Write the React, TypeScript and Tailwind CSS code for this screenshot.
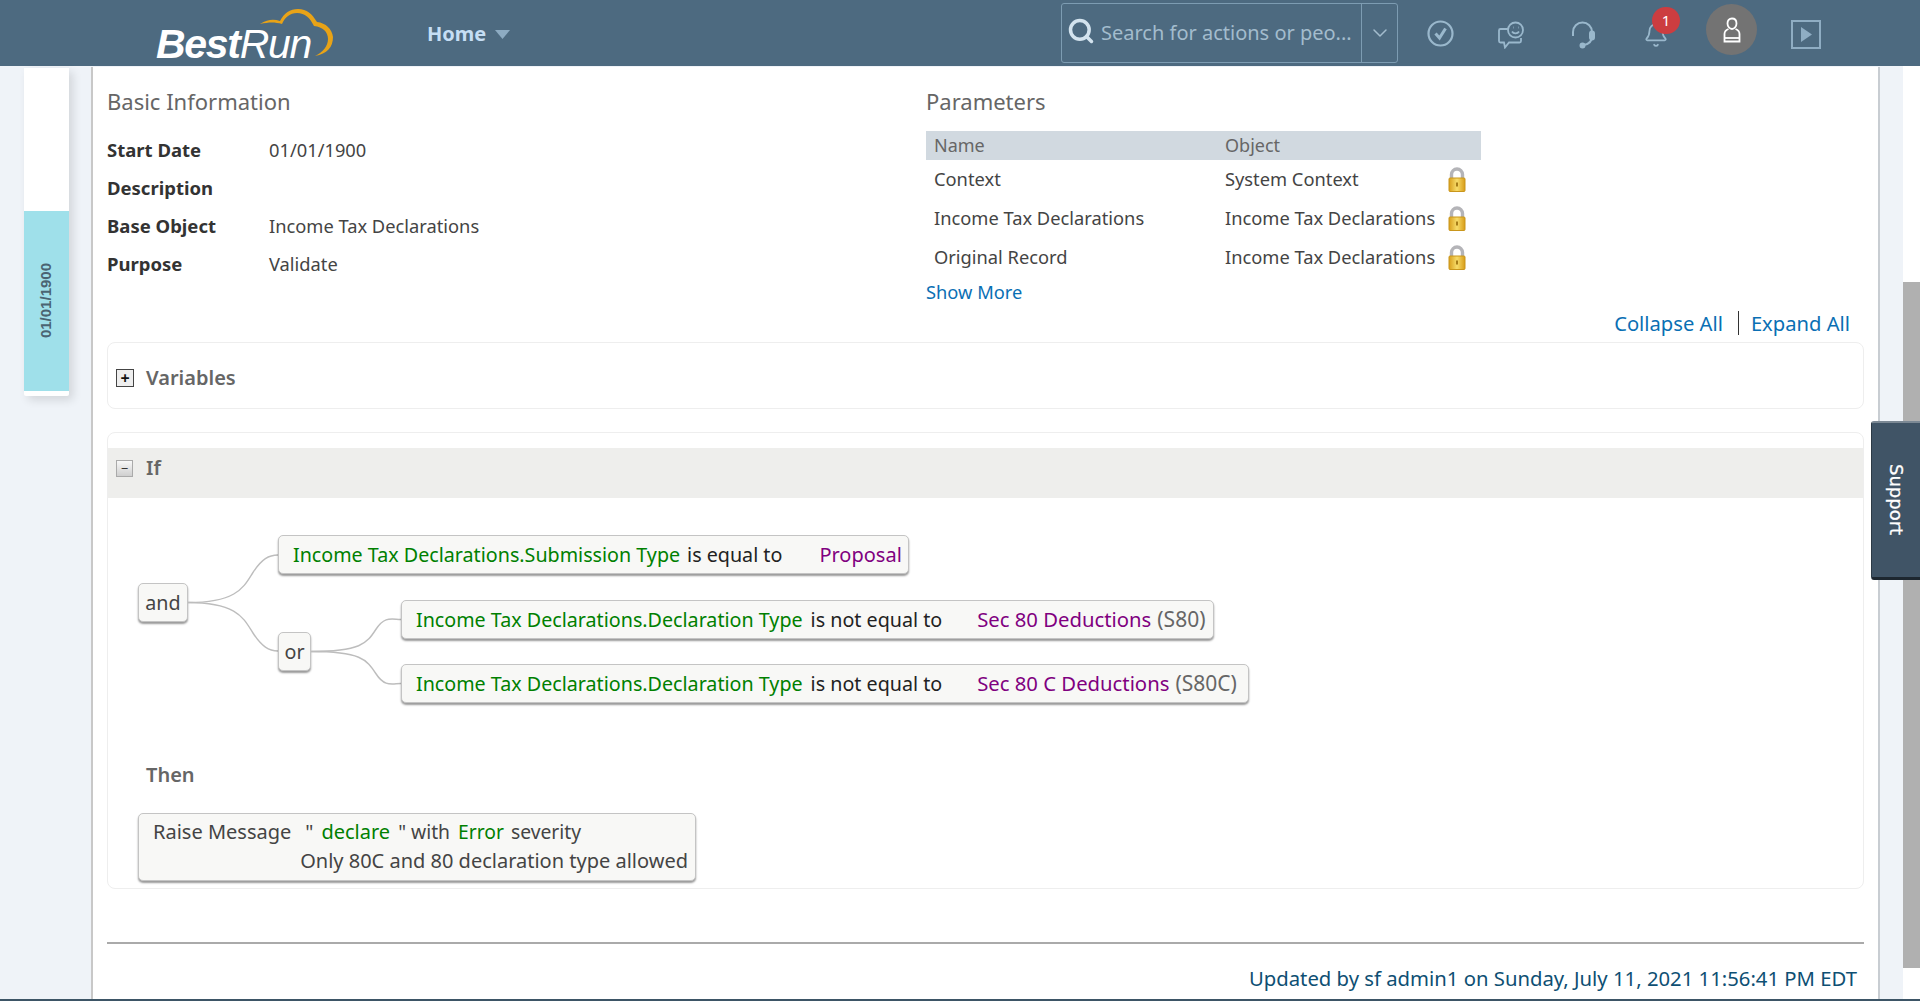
import { ChevronDown, Bell, Search } from 'lucide-react';

interface InfoRow {
  label: string;
  value: string;
}

interface ParamRow {
  name: string;
  object: string;
}

const infoRows: InfoRow[] = [
  { label: 'Start Date', value: '01/01/1900' },
  { label: 'Description', value: '' },
  { label: 'Base Object', value: 'Income Tax Declarations' },
  { label: 'Purpose', value: 'Validate' },
];

const paramRows: ParamRow[] = [
  { name: 'Context', object: 'System Context' },
  { name: 'Income Tax Declarations', object: 'Income Tax Declarations' },
  { name: 'Original Record', object: 'Income Tax Declarations' },
];

function Lock() {
  return (
    <svg width="18" height="25" viewBox="0 0 18 25" className="shrink-0">
      <defs>
        <linearGradient id="lockbody" x1="0" y1="0" x2="1" y2="0">
          <stop offset="0" stopColor="#d99f1c" />
          <stop offset="0.5" stopColor="#f7dc6a" />
          <stop offset="1" stopColor="#d89c18" />
        </linearGradient>
      </defs>
      <path d="M3.500 12V7.500a5.500 5.500 0 0 1 11 0V12" fill="none" stroke="#b4b4b8" strokeWidth="3.400" />
      <rect x="1" y="11" width="16" height="13.500" rx="1" fill="url(#lockbody)" stroke="#c9961c" />
      <rect x="8" y="15.500" width="2" height="4" fill="#a67c18" />
    </svg>
  );
}

function Node({ children, className }: { children: React.ReactNode; className: string }) {
  return (
    <div
      className={`h-[39px] shrink-0 flex items-center whitespace-nowrap rounded-[5px] border border-[#c4c4c4] bg-[#f8f8f6] shadow-[0_2px_2px_rgba(0,0,0,0.4)] text-[19.7px] ${className}`}
    >
      {children}
    </div>
  );
}

function Connector({ w, h, from, to }: { w: number; h: number; from: number; to: number[] }) {
  return (
    <svg width={w} height={h} viewBox={`0 0 ${w} ${h}`} className="shrink-0" fill="none" stroke="#bdbdbd" strokeWidth="1.4">
      {to.map((y) => (
        <path key={y} d={`M0 ${from} C${w * 0.55} ${from} ${w * 0.62} ${(from + y) / 2 + (y < from ? 8 : -8)} ${w * 0.72} ${(from + y) / 2 + (y < from ? -6 : 6)} S${w * 0.9} ${y} ${w} ${y}`} />
      ))}
    </svg>
  );
}

function App() {
  return (
    <div className="w-[1920px] h-[1001px] overflow-hidden flex flex-col bg-[#eff3f8] font-['Noto_Sans',sans-serif] text-[#333]">
      {/* top bar */}
      <header className="relative h-[66px] shrink-0 flex items-center bg-[#4d6a80]">
        <div className="ml-[156px] w-[271px] relative h-[66px]">
          <div className="absolute left-0 top-[21px] whitespace-nowrap italic text-white text-[41px] leading-[46px] tracking-[-1.3px] font-['Liberation_Sans',sans-serif]">
            <span className="font-bold">Best</span>
            <span className="font-normal">Run</span>
          </div>
          <svg width="90" height="60" viewBox="0 0 90 60" className="absolute left-[100px] top-0" fill="none">
            <path d="M4 24c8-5 14-5 20-3 4-8 10-12 18-12 9 0 14 5 19 13 9 1 15 7 16 15 0 10-6 17-18 19 8-4 13-10 13-17 0-7-5-12-14-13-4-8-9-13-17-13-7 0-12 4-15 11-7-2-13-2-22 0z" fill="#e8a317" />
          </svg>
        </div>
        <span className="w-[68px] mt-[2px] text-[20px] font-bold text-[#c5def4]">Home</span>
        <svg width="15" height="9" viewBox="0 0 15 9" className="shrink-0 mt-[2px]">
          <path d="M0 0h15L7.5 9z" fill="#8dabc2" />
        </svg>
        <div className="ml-[551px] w-[337px] h-[60px] -mt-[1px] flex items-center rounded-[3px] border border-[#7d9cb2]">
          <Search className="ml-[5px] w-[28px] h-[28px] text-[#d3e3ee] shrink-0 -mt-[3px]" strokeWidth={3} />
          <span className="ml-[6px] w-[260px] text-[20px] text-[#a3bccd] whitespace-nowrap">Search for actions or peo...</span>
          <div className="h-full w-[36px] border-l border-[#7d9cb2] flex items-center justify-center">
            <ChevronDown className="w-[24px] h-[24px] text-[#a3bccd]" strokeWidth={1.5} />
          </div>
        </div>
        <svg width="27" height="27" viewBox="0 0 27 27" className="ml-[29px] shrink-0" fill="none" stroke="#9ab8cc">
          <circle cx="13.500" cy="13.500" r="12" strokeWidth="2.200" />
          <path d="M8.500 13.500l4 4.500 6-9.500" strokeWidth="3" />
        </svg>
        <svg width="28" height="28" viewBox="0 0 28 28" className="ml-[43px] shrink-0 mt-[3px]" fill="none" stroke="#9ab8cc" strokeWidth="1.8">
          <path d="M11 8H3.5a1.5 1.5 0 0 0-1.5 1.5V20a1.5 1.5 0 0 0 1.5 1.500H7l1 5 4-5h10.500a1.500 1.500 0 0 0 1.500-1.500v-3" />
          <circle cx="18.500" cy="9" r="7.500" />
          <path d="M15 10.500c1.500 2.500 5.500 2.500 7 0M16 6.500h.5M21 6.500h.5" />
        </svg>
        <svg width="26" height="28" viewBox="0 0 26 28" className="ml-[44px] shrink-0 mt-[3px]" fill="none" stroke="#9ab8cc" strokeWidth="2">
          <path d="M4 15V11a9.500 9.500 0 0 1 19 0v4" />
          <path d="M23 15c0 5-3 8-8 9" />
          <rect x="21" y="10.500" width="4" height="8" rx="2" fill="#9ab8cc" />
          <circle cx="13.500" cy="24.500" r="2" fill="#9ab8cc" />
        </svg>
        <div className="relative ml-[48px] w-[26px] h-[30px] shrink-0 mt-[2px]">
          <Bell className="w-[26px] h-[28px] text-[#9ab8cc] mt-[2px]" strokeWidth={1.6} />
          <span className="absolute left-[9px] top-[-12px] w-[28px] h-[27px] rounded-full bg-[#cc3d40] text-white text-[15px] flex items-center justify-center">1</span>
        </div>
        <div className="ml-[37px] w-[51px] h-[51px] -mt-[7px] rounded-full bg-[#737373] flex items-center justify-center shrink-0">
          <svg width="20" height="26" viewBox="0 0 20 26" fill="none" stroke="#fff" strokeWidth="1.8">
            <path d="M10 1.500c3 0 4.500 2.200 4.500 5s-2 5.500-4.500 5.500-4.500-2.700-4.500-5.500 1.500-5 4.500-5z" />
            <path d="M6.500 12c-2.500 1-4 2.500-4 5v7.500h15V17c0-2.500-1.500-4-4-5" />
            <path d="M2.500 21h15" />
          </svg>
        </div>
        <svg width="30" height="29" viewBox="0 0 30 29" className="ml-[34px] shrink-0 mt-[2px]" fill="none">
          <rect x="1" y="1" width="28" height="27" stroke="#8fadc3" strokeWidth="2" />
          <path d="M10 7l11 7.500L10 22z" fill="#8fadc3" />
        </svg>
      </header>

      <div className="relative flex-1 min-h-0 flex">
        {/* effective date rail */}
        <div className="w-[91px] shrink-0 pl-[24px]">
          <div className="w-[45px] mt-[2px] h-[328px] flex flex-col bg-white rounded-b-[2px] shadow-[4px_4px_10px_rgba(0,0,0,0.12)]">
            <div className="h-[143px]"></div>
            <div className="h-[180px] bg-[#9fe0ea] flex items-center justify-center pr-[1px]">
              <span className="[writing-mode:vertical-rl] rotate-180 text-[15px] font-bold text-[#4a6472] font-['Liberation_Sans',sans-serif]">01/01/1900</span>
            </div>
          </div>
        </div>

        {/* rule panel */}
        <main className="w-[1789px] shrink-0 mt-[1px] h-[932px] bg-white border-l-2 border-r-2 border-l-[#c8c8c8] border-r-[#c8cdd2] pl-[14px] pr-[14px]">
          <div className="flex h-[241px]">
            <section className="w-[819px] shrink-0 pt-[19px]">
              <h2 className="text-[22px] font-normal leading-[30px] text-[#666]">Basic Information</h2>
              <div className="mt-[15px] flex flex-col">
                {infoRows.map((row) => (
                  <div key={row.label} className="h-[38px] flex items-center text-[18.3px]">
                    <span className="w-[162px] text-[18.500px] font-bold text-[#333]">{row.label}</span>
                    <span className="text-[#444]">{row.value}</span>
                  </div>
                ))}
              </div>
            </section>
            <section className="w-[555px] shrink-0 pt-[19px]">
              <h2 className="text-[22px] font-normal leading-[30px] text-[#666]">Parameters</h2>
              <div className="mt-[15px] h-[29px] bg-[#d1d9e0] flex items-center pl-[8px] text-[18px] text-[#666]">
                <span className="w-[291px]">Name</span>
                <span>Object</span>
              </div>
              {paramRows.map((row) => (
                <div key={row.name} className="h-[39px] flex items-center pl-[8px] text-[18.3px] text-[#444]">
                  <span className="w-[291px] mb-[2px] whitespace-nowrap">{row.name}</span>
                  <span className="w-[223px] mb-[2px] whitespace-nowrap">{row.object}</span>
                  <Lock />
                </div>
              ))}
              <a className="block mt-[2px] text-[18.3px] text-[#0a6fb4] leading-[26px]">Show More</a>
            </section>
          </div>

          <div className="h-[34px] -mt-[1px] pb-[2px] flex items-center justify-end pr-[14px] text-[20.200px] text-[#0a6fb4]">
            <span className="pr-[15px] border-r border-[#333] leading-[24px]">Collapse All</span>
            <span className="pl-[12px] leading-[24px]">Expand All</span>
          </div>

          <div className="mt-[1px] h-[67px] rounded-[8px] border border-[#eeeeee] flex items-center pl-[8px] pt-[5px]">
            <span className="w-[18px] h-[18px] border border-[#444] bg-[#eeeeee] flex items-center justify-center text-[16px] font-bold leading-none text-[#111]">+</span>
            <span className="ml-[12px] text-[20px] font-semibold text-[#666]">Variables</span>
          </div>

          <div className="mt-[23px] h-[457px] rounded-[8px] border border-[#eeeeee] pt-[15px]">
            <div className="h-[50px] bg-[#eeeeec] flex items-center pl-[8px] pb-[10px]">
              <span className="w-[17px] h-[17px] border border-[#aaa] bg-gradient-to-b from-[#f8f8f8] to-[#cfcfcf] flex items-center justify-center text-[13px] leading-none text-[#333]">−</span>
              <span className="ml-[13px] text-[20px] font-semibold text-[#666]">If</span>
            </div>

            <div className="mt-[37px] ml-[30px] flex items-start">
              <Node className="w-[50px] mt-[48px] justify-center text-[#444]">and</Node>
              <Connector w={90} h={136} from={67.5} to={[20, 116]} />
              <div className="flex flex-col">
                <Node className="w-[631px] pl-[14px]">
                  <span className="text-[#008000]">Income Tax Declarations.Submission Type</span>
                  <span className="ml-[7px] text-[#222]">is equal to</span>
                  <span className="ml-[37px] text-[#800080] text-[20px]">Proposal</span>
                </Node>
                <div className="mt-[26px] flex items-start">
                  <Node className="w-[33px] mt-[32px] justify-center text-[#444]">or</Node>
                  <Connector w={90} h={103} from={51.5} to={[19.5, 83.5]} />
                  <div className="flex flex-col gap-[25px]">
                    <Node className="w-[813px] pl-[14px]">
                      <span className="text-[#008000]">Income Tax Declarations.Declaration Type</span>
                      <span className="ml-[8px] text-[#222]">is not equal to</span>
                      <span className="ml-[35px] text-[#800080] text-[20.3px]">Sec 80 Deductions</span>
                      <span className="ml-[6px] text-[#666] text-[21px]">(S80)</span>
                    </Node>
                    <Node className="w-[848px] pl-[14px]">
                      <span className="text-[#008000]">Income Tax Declarations.Declaration Type</span>
                      <span className="ml-[8px] text-[#222]">is not equal to</span>
                      <span className="ml-[35px] text-[#800080] text-[20.3px]">Sec 80 C Deductions</span>
                      <span className="ml-[6px] text-[#666] text-[21px]">(S80C)</span>
                    </Node>
                  </div>
                </div>
              </div>
            </div>

            <h3 className="mt-[58px] ml-[38px] text-[20px] leading-[28px] font-semibold text-[#666]">Then</h3>
            <div className="mt-[24px] ml-[30px] w-[558px] h-[68px] rounded-[5px] border border-[#c4c4c4] bg-[#f8f8f6] shadow-[0_2px_2px_rgba(0,0,0,0.4)] px-[14px] pr-[7px] pt-[3px] text-[20px] leading-[29px] text-[#444]">
              <div className="whitespace-nowrap">
                Raise Message<span className="ml-[14px]">"</span>
                <span className="ml-[8px] text-[#008000]">declare</span>
                <span className="ml-[8px] text-[19.3px]">" with</span>
                <span className="ml-[8px] text-[#008000] text-[19.3px]">Error</span>
                <span className="ml-[7px] text-[19.3px]">severity</span>
              </div>
              <div className="text-right whitespace-nowrap">Only 80C and 80 declaration type allowed</div>
            </div>
          </div>

          <div className="mt-[53px] h-[2px] bg-[#aaaaaa]"></div>
          <p className="mt-[20px] pr-[7px] text-right text-[20.3px] leading-[28px] text-[#0e4f73] whitespace-nowrap">Updated by sf admin1 on Sunday, July 11, 2021 11:56:41 PM EDT</p>
        </main>

        <div className="w-[23px] shrink-0"></div>

        {/* page scrollbar */}
        <div className="w-[17px] shrink-0 pt-[216px] bg-white">
          <div className="h-[686px] bg-[#b0b0b0]"></div>
        </div>

        {/* support tab */}
        <div className="absolute left-[1871px] top-[355px] w-[49px] h-[159px] bg-[#405466] border-t-2 border-t-[#7b8894] border-b-[3px] border-b-[#1d2730] border-l border-l-[#2c3a46] rounded-l-[3px] flex items-center justify-center">
          <span className="[writing-mode:vertical-rl] text-white text-[18px] [-webkit-text-stroke:0.3px_white] font-['DejaVu_Sans',sans-serif]">Support</span>
        </div>
      </div>
      <div className="h-[2px] shrink-0 bg-[#3d5566]"></div>
    </div>
  );
}

export default App;
